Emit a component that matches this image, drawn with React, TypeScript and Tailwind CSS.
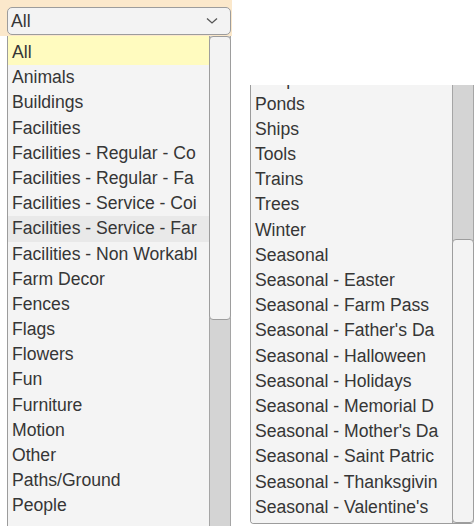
import React from "react";

const firstPage = [
    "All",
    "Animals",
    "Buildings",
    "Facilities",
    "Facilities - Regular - Co",
    "Facilities - Regular - Fa",
    "Facilities - Service - Coi",
    "Facilities - Service - Far",
    "Facilities - Non Workabl",
    "Farm Decor",
    "Fences",
    "Flags",
    "Flowers",
    "Fun",
    "Furniture",
    "Motion",
    "Other",
    "Paths/Ground",
    "People",
];

const secondPage = [
    "People",
    "Ponds",
    "Ships",
    "Tools",
    "Trains",
    "Trees",
    "Winter",
    "Seasonal",
    "Seasonal - Easter",
    "Seasonal - Farm Pass",
    "Seasonal - Father's Da",
    "Seasonal - Halloween",
    "Seasonal - Holidays",
    "Seasonal - Memorial D",
    "Seasonal - Mother's Da",
    "Seasonal - Saint Patric",
    "Seasonal - Thanksgivin",
    "Seasonal - Valentine's",
];

interface IRowProps {
    label: string;
    selected?: boolean;
    hovered?: boolean;
}

function Row({ label, selected, hovered }: IRowProps) {
    if (selected) {
        // selected row also paints the list's top padding
        return (
            <div className="h-[29.2px] pt-[4px] bg-[#fffbbf] leading-[25.2px] pl-[4px] whitespace-nowrap overflow-hidden">
                {label}
            </div>
        );
    }
    return (
        <div className={`h-[25.2px] leading-[25.2px] pl-[4px] whitespace-nowrap overflow-hidden ${hovered ? "bg-[#e9e9e9]" : ""}`}>
            {label}
        </div>
    );
}

interface IScrollProps {
    thumbFirst: boolean;
    trackHeight: string;
}

// fake scrollbar so it looks the same in every browser
function FakeScrollbar({ thumbFirst, trackHeight }: IScrollProps) {
    return (
        <div className="w-[22px] flex flex-col bg-[#d4d4d4] border-x border-[#a5a5a5]">
            {!thumbFirst && <div className={trackHeight}></div>}
            <div className="flex-1 bg-[#f3f3f3] border border-[#9d9d9d] rounded-[4px] -mx-[1px]"></div>
            {thumbFirst && <div className={trackHeight}></div>}
        </div>
    );
}

export default function App() {
    return (
        <div
            className="w-[475px] h-[526px] overflow-hidden bg-white flex text-[17.6px] text-[#363636]"
            style={{ fontFamily: '"Liberation Sans", Arial, sans-serif' }}
        >
            <div className="w-[232px] flex flex-col shrink-0">
                <div className="h-[36px] bg-[#fbe8cb] pl-[7px] pt-[7px]">
                    <div className="w-[224px] h-[28px] bg-[#f3f3f3] border border-[#9c9c9c] rounded-[5px] flex items-center justify-between pl-[3px] pr-[12px]">
                        <span>All</span>
                        <svg width="12" height="8" viewBox="0 0 12 8" fill="none">
                            <path d="M1 1.5 L6 6 L11 1.5" stroke="#555" strokeWidth="1.3" />
                        </svg>
                    </div>
                </div>
                <div className="ml-[7px] w-[224px] h-[490px] flex">
                    <div className="flex-1 border-l border-[#9c9c9c] bg-[#f4f4f4] overflow-hidden">
                        {firstPage.map((label, i) => (
                            <Row key={label} label={label} selected={i === 0} hovered={i === 7} />
                        ))}
                    </div>
                    <div className="flex">
                        <FakeScrollbar thumbFirst={true} trackHeight="h-[206px]" />
                    </div>
                </div>
            </div>

            <div className="ml-[18px] mt-[85px] w-[224px] h-[439px] flex border-b border-l border-[#9c9c9c] rounded-b-[4px] overflow-hidden">
                <div className="flex-1 bg-[#f4f4f4] overflow-hidden">
                    <div className="-mt-[18.5px]">
                        {secondPage.map((label) => (
                            <Row key={label} label={label} />
                        ))}
                    </div>
                </div>
                <div className="flex">
                    <FakeScrollbar thumbFirst={false} trackHeight="h-[154px]" />
                </div>
            </div>
        </div>
    );
}
